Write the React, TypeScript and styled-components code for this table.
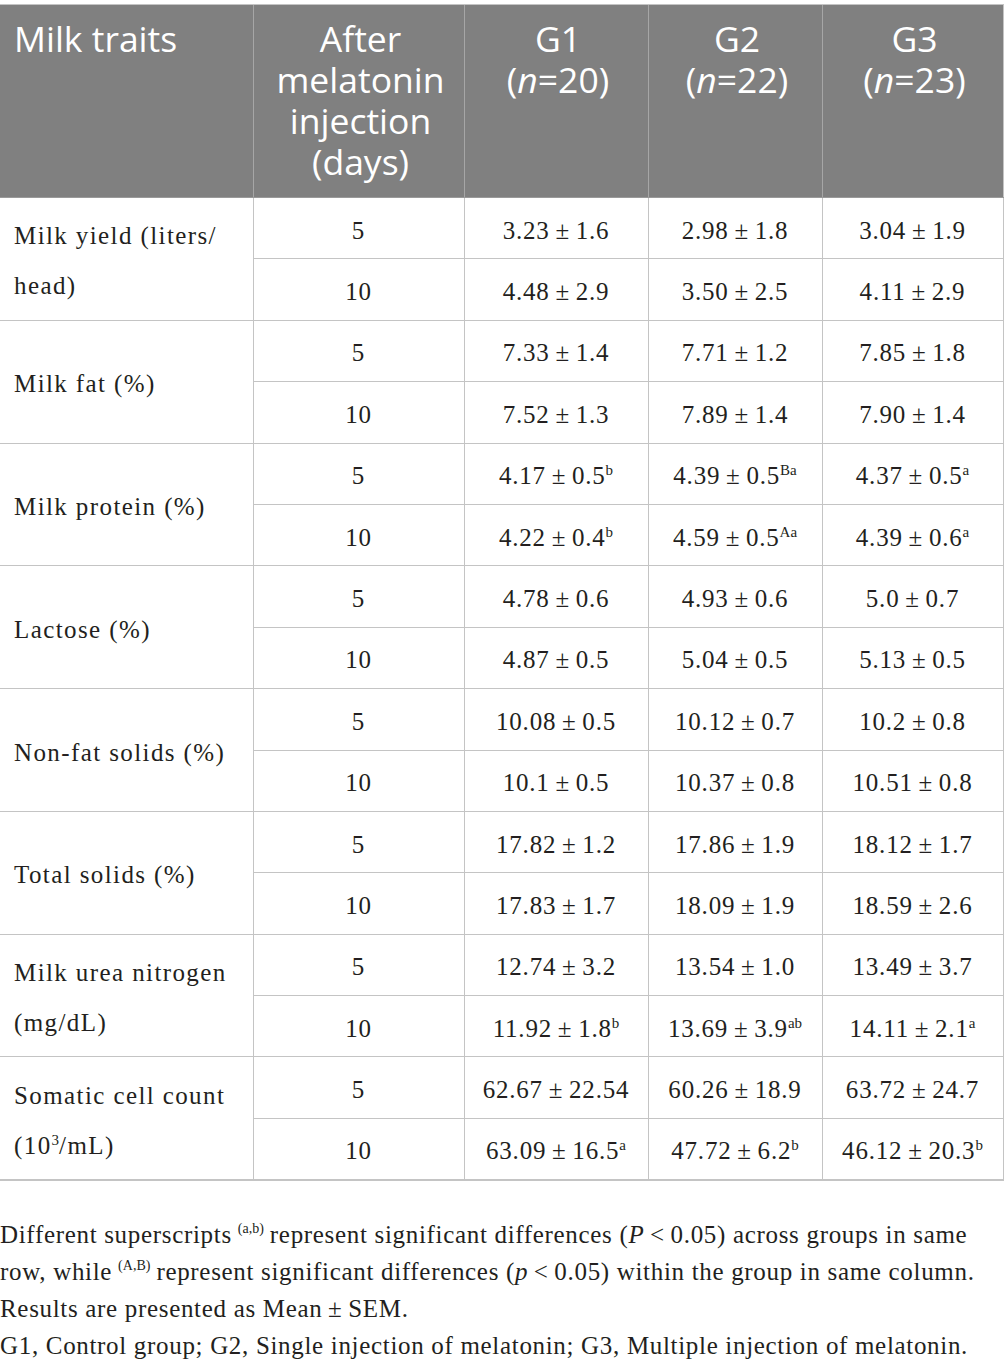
import React from "react";
import styled, { createGlobalStyle } from "styled-components";

const Global = createGlobalStyle`
  html, body { margin: 0; padding: 0; background: #ffffff; }
  body { font-family: "Liberation Serif", "Times New Roman", serif; color: #231f20; }
`;

const Page = styled.div`
  padding-top: 4px;
  width: 1004px;
`;

const Table = styled.table`
  width: 1003px;
  border-collapse: collapse;
  table-layout: fixed;
  border-bottom: 2px solid #c4c4c4;
  border-right: 1px solid #c4c4c4;
`;

const HeadCell = styled.th<{ $align?: "left" | "center" }>`
  background: #808080;
  color: #ffffff;
  font-family: "Open Sans", "Noto Sans", sans-serif;
  font-weight: 400;
  font-size: 35.5px;
  line-height: 41px;
  text-align: ${(p) => p.$align ?? "center"};
  vertical-align: top;
  height: 193px;
  box-sizing: border-box;
  padding: 13px 10px 12px 14px;
  border-top: 1px solid #c4c4c4;
  border-left: 1px solid #a6a6a6;
  border-bottom: 1px solid #9a9a9a;
  white-space: nowrap;
  &:first-child { border-left: none; }
`;

const Row = styled.tr`
  height: 61.4px;
`;

const TraitCell = styled.td`
  font-size: 25px;
  letter-spacing: 1.4px;
  line-height: 50px;
  padding: 5px 14px 0;
  vertical-align: middle;
  text-align: left;
  border-top: 1px solid #c4c4c4;
  white-space: nowrap;
`;

const Cell = styled.td`
  font-size: 25px;
  letter-spacing: 0.8px;
  line-height: 28px;
  text-align: center;
  vertical-align: middle;
  padding: 5px 4px 0;
  border-top: 1px solid #c4c4c4;
  border-left: 1px solid #c4c4c4;
  white-space: nowrap;
`;

const Sup = styled.sup`
  font-size: 15px;
  letter-spacing: 0;
  line-height: 0;
  vertical-align: 9px;
`;

const Notes = styled.div`
  margin-top: 35px;
  font-size: 25px;
  letter-spacing: 0.68px;
  line-height: 37px;
  color: #231f20;
  white-space: nowrap;
`;

const NoteSup = styled.sup`
  font-size: 14px;
  letter-spacing: 0;
  line-height: 0;
  vertical-align: 10px;
  margin: 0 6px 0 6px;
`;

const PM = "\u2009±\u2009";

type Trait = { label: React.ReactNode; r5: [string, string?][]; r10: [string, string?][] };

const v = (a: string, b: string, s?: string): [string, string?] => [a + PM + b, s];

const traits: Trait[] = [
  {
    label: (<>Milk yield (liters/<br />head)</>),
    r5: [v("3.23", "1.6"), v("2.98", "1.8"), v("3.04", "1.9")],
    r10: [v("4.48", "2.9"), v("3.50", "2.5"), v("4.11", "2.9")],
  },
  {
    label: "Milk fat (%)",
    r5: [v("7.33", "1.4"), v("7.71", "1.2"), v("7.85", "1.8")],
    r10: [v("7.52", "1.3"), v("7.89", "1.4"), v("7.90", "1.4")],
  },
  {
    label: "Milk protein (%)",
    r5: [v("4.17", "0.5", "b"), v("4.39", "0.5", "Ba"), v("4.37", "0.5", "a")],
    r10: [v("4.22", "0.4", "b"), v("4.59", "0.5", "Aa"), v("4.39", "0.6", "a")],
  },
  {
    label: "Lactose (%)",
    r5: [v("4.78", "0.6"), v("4.93", "0.6"), v("5.0", "0.7")],
    r10: [v("4.87", "0.5"), v("5.04", "0.5"), v("5.13", "0.5")],
  },
  {
    label: "Non-fat solids (%)",
    r5: [v("10.08", "0.5"), v("10.12", "0.7"), v("10.2", "0.8")],
    r10: [v("10.1", "0.5"), v("10.37", "0.8"), v("10.51", "0.8")],
  },
  {
    label: "Total solids (%)",
    r5: [v("17.82", "1.2"), v("17.86", "1.9"), v("18.12", "1.7")],
    r10: [v("17.83", "1.7"), v("18.09", "1.9"), v("18.59", "2.6")],
  },
  {
    label: (<>Milk urea nitrogen<br />(mg/dL)</>),
    r5: [v("12.74", "3.2"), v("13.54", "1.0"), v("13.49", "3.7")],
    r10: [v("11.92", "1.8", "b"), v("13.69", "3.9", "ab"), v("14.11", "2.1", "a")],
  },
  {
    label: (<>Somatic cell count<br />(10<Sup>3</Sup>/mL)</>),
    r5: [v("62.67", "22.54"), v("60.26", "18.9"), v("63.72", "24.7")],
    r10: [v("63.09", "16.5", "a"), v("47.72", "6.2", "b"), v("46.12", "20.3", "b")],
  },
];

const Values = ({ vals }: { vals: [string, string?][] }) => (
  <>
    {vals.map(([t, s], i) => (
      <Cell key={i}>
        {t}
        {s ? <Sup>{s}</Sup> : null}
      </Cell>
    ))}
  </>
);

export default function App() {
  return (
    <Page>
      <Global />
      <Table>
        <colgroup>
          <col style={{ width: 253 }} />
          <col style={{ width: 211 }} />
          <col style={{ width: 184 }} />
          <col style={{ width: 174 }} />
          <col style={{ width: 181 }} />
        </colgroup>
        <thead>
          <tr>
            <HeadCell $align="left">Milk traits</HeadCell>
            <HeadCell>After<br />melatonin<br />injection<br />(days)</HeadCell>
            <HeadCell>G1<br />(<i>n</i>=20)</HeadCell>
            <HeadCell>G2<br />(<i>n</i>=22)</HeadCell>
            <HeadCell>G3<br />(<i>n</i>=23)</HeadCell>
          </tr>
        </thead>
        <tbody>
          {traits.map((t, i) => (
            <React.Fragment key={i}>
              <Row>
                <TraitCell rowSpan={2}>{t.label}</TraitCell>
                <Cell>5</Cell>
                <Values vals={t.r5} />
              </Row>
              <Row>
                <Cell>10</Cell>
                <Values vals={t.r10} />
              </Row>
            </React.Fragment>
          ))}
        </tbody>
      </Table>
      <Notes>
        Different superscripts<NoteSup>(a,b)</NoteSup>represent significant differences (<i>P</i>{"\u2009<\u2009"}0.05) across groups in same
        <br />
        row, while<NoteSup>(A,B)</NoteSup>represent significant differences (<i>p</i>{"\u2009<\u2009"}0.05) within the group in same column.
        <br />
        Results are presented as Mean{PM}SEM.
        <br />
        G1, Control group; G2, Single injection of melatonin; G3, Multiple injection of melatonin.
      </Notes>
    </Page>
  );
}
